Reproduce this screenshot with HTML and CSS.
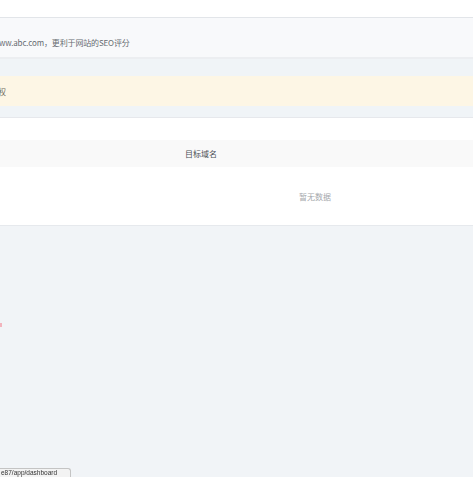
FILE: index.html
```html
<!DOCTYPE html>
<html lang="zh-CN">
<head>
<meta charset="utf-8">
<title>SEO</title>
<link rel="stylesheet" href="styles.css">
</head>
<body>
<div class="topbar"></div>
<div class="tip"><span class="tip-text">ww.abc.com，更利于网站的SEO评分</span></div>
<div class="divider"></div>
<div class="notice-area">
  <div class="notice"><span class="notice-text">权</span></div>
</div>
<div class="card">
  <div class="table">
    <div class="thead">
      <div class="th">目标域名</div>
    </div>
    <div class="tbody">
      <div class="empty">暂无数据</div>
    </div>
  </div>
</div>
<div class="rest">
  <div class="mark"></div>
</div>
<div class="status">e87/app/dashboard</div>
</body>
</html>
```
FILE: styles.css
```css
html, body {
  margin: 0;
  padding: 0;
}
body {
  background: #f1f4f7;
  font-family: "Noto Sans CJK SC", "Noto Sans", sans-serif;
  font-size: 8px;
  color: #555a60;
  height: 477px;
  overflow: hidden;
}
.topbar {
  height: 17px;
  background: #ffffff;
  border-bottom: 1px solid #e2e5e9;
}
.tip {
  height: 39px;
  background: #f8f9fb;
  display: flex;
  align-items: center;
  overflow: hidden;
}
.tip-text {
  margin-left: -1px;
  padding-top: 9px;
  letter-spacing: -0.15px;
  color: #666b71;
  white-space: nowrap;
}
.divider {
  height: 2px;
  background: #eceef1;
}
.notice-area {
  background: #f0f4f7;
  padding-top: 17px;
  height: 41px;
  border-bottom: 1px solid #e6e8ec;
  overflow: hidden;
}
.notice {
  height: 30px;
  background: #fdf6e5;
  display: flex;
  align-items: center;
  overflow: hidden;
}
.notice-text {
  margin-left: -2px;
  color: #6d6a60;
}
.card {
  background: #ffffff;
  padding-top: 22px;
  border-bottom: 1px solid #e6e9ed;
}
.thead {
  height: 27px;
  background: #f9f9f9;
  display: grid;
  grid-template-columns: 402px 1fr;
  align-items: center;
}
.th {
  text-align: center;
  color: #4a4f55;
}
.tbody {
  height: 58px;
  display: flex;
  align-items: center;
}
.empty {
  margin-left: 299px;
  color: #a5a8ac;
}
.rest {
  padding-top: 97px;
}
.mark {
  width: 2px;
  height: 4px;
  background: #f2b4bd;
}
.status {
  position: fixed;
  left: 0;
  bottom: 0;
  width: 69px;
  height: 8px;
  background: #f3f3f3;
  border: 1px solid #c4c4c4;
  border-left: none;
  border-bottom: none;
  border-radius: 0 3px 0 0;
  font-family: "Liberation Sans", sans-serif;
  font-size: 6.5px;
  line-height: 8px;
  color: #333;
  white-space: nowrap;
  overflow: hidden;
  padding-left: 1px;
}
```
